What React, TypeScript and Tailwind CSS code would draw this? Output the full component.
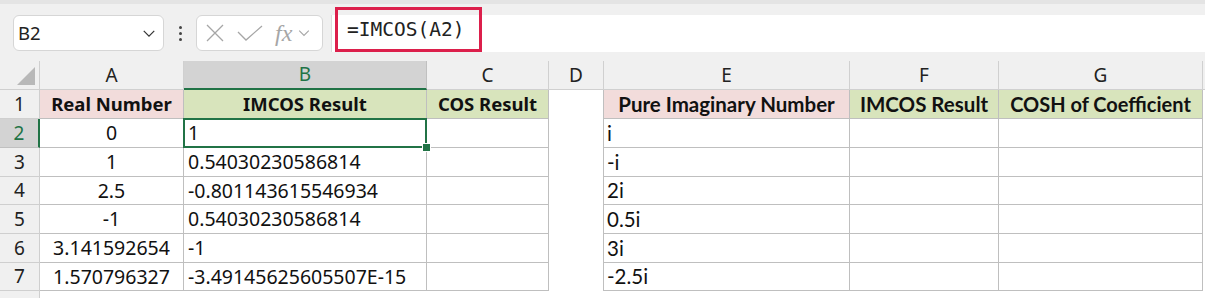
const leftFont = { fontFamily: '"Noto Sans", "Open Sans", sans-serif' };
const rightFont = { fontFamily: "Lato, sans-serif" };

const cols = ["A", "B", "C", "D", "E", "F", "G"];

const leftRows = [
  ["0", "1"],
  ["1", "0.54030230586814"],
  ["2.5", "-0.801143615546934"],
  ["-1", "0.54030230586814"],
  ["3.141592654", "-1"],
  ["1.570796327", "-3.49145625605507E-15"],
];

const rightRows = ["i", "-i", "2i", "0.5i", "3i", "-2.5i"];

const Chevron = ({ className }: { className?: string }) => (
  <svg viewBox="0 0 16 10" className={className} fill="none" stroke="currentColor" strokeWidth="1.4">
    <path d="M2 2 L8 8 L14 2" />
  </svg>
);

const App = () => {
  return (
    <div className="w-[1205px] h-[298px] overflow-hidden bg-white" style={leftFont}>
      {/* formula bar */}
      <div className="h-[61px] bg-[#f0f0f0] relative border-t-[4px] border-[#e4e4e4]">
        <div className="flex items-center h-[53px] pt-[5px]">
          <div className="ml-[13px] w-[151px] h-[36px] bg-white border border-[#d6d6d6] rounded-[6px] flex items-center justify-between pl-[4px] pr-[7px]">
            <span className="text-[18.5px] text-[#222]">B2</span>
            <Chevron className="w-[14px] h-[9px] text-[#333]" />
          </div>
          <div className="w-[32px] flex flex-col items-center gap-[3px]">
            <span className="w-[3px] h-[3px] bg-[#444] rounded-full" />
            <span className="w-[3px] h-[3px] bg-[#444] rounded-full" />
            <span className="w-[3px] h-[3px] bg-[#444] rounded-full" />
          </div>
          <div className="w-[127px] h-[36px] bg-white border border-[#d6d6d6] rounded-[6px] flex items-center pl-[9px] text-[#a6a6a6]">
            <svg viewBox="0 0 18 18" className="w-[18px] h-[18px]" stroke="currentColor" strokeWidth="1.3">
              <path d="M1 1 L17 17 M17 1 L1 17" />
            </svg>
            <svg viewBox="0 0 26 16" className="w-[26px] h-[16px] ml-[13px]" fill="none" stroke="currentColor" strokeWidth="1.3">
              <path d="M1 7 L9 15 L25 1" />
            </svg>
            <span className="ml-[12px] text-[24px] italic leading-none" style={{ fontFamily: '"Liberation Serif", serif' }}>
              fx
            </span>
            <Chevron className="w-[14px] h-[8px] ml-[5px]" />
          </div>
          <div className="ml-[8px] flex-1 h-[37px] bg-white border-l border-[#dcdcdc]" />
        </div>
        <div
          className="absolute left-[335px] top-[3px] w-[147px] h-[45px] border-[3px] border-[#dc1f4b] flex items-center pl-[9px] text-[19.5px] text-[#222]"
          style={{ fontFamily: '"DejaVu Sans Mono", "Liberation Mono", monospace' }}
        >
          =IMCOS(A2)
        </div>
      </div>

      {/* grid */}
      <div className="grid leading-none grid-cols-[40px_144px_243px_122px_55px_246px_149px_204px_2px] grid-rows-[29px_29px_29px_29px_28px_29px_29px_28px_7px]">
        {/* column headers */}
        <div className="bg-[#f0f0f0] border-r border-b border-[#cfcfcf] relative">
          <svg viewBox="0 0 20 20" className="absolute right-[4px] bottom-[4px] w-[18px] h-[18px]">
            <path d="M20 0 L20 20 L0 20 Z" fill="#b8b8b8" />
          </svg>
        </div>
        {cols.map((c) =>
          c === "B" ? (
            <div
              key={c}
              className="bg-[#d3d3d3] border-r border-[#c0c0c0] border-b-2 border-b-[#217346] flex items-center justify-center text-[19px] text-[#217346]"
            >
              {c}
            </div>
          ) : (
            <div
              key={c}
              className="bg-[#f0f0f0] border-r border-b border-[#d0d0d0] flex items-center justify-center text-[19px] text-[#222]"
            >
              {c}
            </div>
          )
        )}
        <div className="bg-[#f0f0f0] border-b border-[#d0d0d0]" />

        {/* row 1 */}
        <div className="bg-[#f0f0f0] border-r border-b border-[#cfcfcf] flex items-center justify-center text-[19px] text-[#222]">
          1
        </div>
        <div className="bg-[#f2dcdb] border-r border-b border-[#bfbfbf] flex items-center justify-center text-[18.5px] font-bold text-[#111]">
          Real Number
        </div>
        <div className="bg-[#d8e4bc] border-r border-b border-[#bfbfbf] flex items-center justify-center text-[18.5px] font-bold text-[#111]">
          IMCOS Result
        </div>
        <div className="bg-[#d8e4bc] border-r border-b border-[#bfbfbf] flex items-center justify-center text-[18.5px] font-bold text-[#111]">
          COS Result
        </div>
        <div className="bg-white border-r border-[#bfbfbf]" />
        <div
          className="bg-[#f2dcdb] border-r border-b border-[#bfbfbf] flex items-center justify-center text-[20.5px] font-bold text-[#111]"
          style={rightFont}
        >
          Pure Imaginary Number
        </div>
        <div
          className="bg-[#d8e4bc] border-r border-b border-[#bfbfbf] flex items-center justify-center text-[20.5px] font-bold text-[#111]"
          style={rightFont}
        >
          IMCOS Result
        </div>
        <div
          className="bg-[#d8e4bc] border-r border-b border-[#bfbfbf] flex items-center justify-center text-[20px] font-bold text-[#111]"
          style={rightFont}
        >
          COSH of Coefficient
        </div>
        <div className="bg-white" />

        {/* rows 2-7 */}
        {leftRows.map((r, i) => {
          const selected = i === 0;
          return [
            <div
              key={`rh${i}`}
              className={`flex items-center justify-center text-[19px] border-b ${
                selected
                  ? "bg-[#d3d3d3] text-[#217346] border-r-2 border-r-[#217346] border-b-[#c0c0c0]"
                  : "bg-[#f0f0f0] text-[#222] border-r border-[#cfcfcf]"
              }`}
            >
              {i + 2}
            </div>,
            <div key={`a${i}`} className="border-r border-b border-[#bfbfbf] flex items-center justify-center text-[19.5px] text-[#111]">
              {r[0]}
            </div>,
            <div key={`b${i}`} className="relative border-r border-b border-[#bfbfbf] flex items-center pl-[4px] text-[19.5px] text-[#111]">
              {r[1]}
              {selected && (
                <>
                  <div className="absolute z-10 left-[-1px] top-[-1px] right-[-1px] bottom-[-1px] border-2 border-[#217346]" />
                  <div className="absolute z-20 right-[-5px] bottom-[-5px] w-[9px] h-[9px] bg-[#217346] border border-white" />
                </>
              )}
            </div>,
            <div key={`c${i}`} className="border-r border-b border-[#bfbfbf]" />,
            <div key={`d${i}`} className="border-r border-[#bfbfbf]" />,
            <div
              key={`e${i}`}
              className="border-r border-b border-[#bfbfbf] flex items-center pl-[3px] text-[20.5px] text-[#111]"
              style={rightFont}
            >
              {rightRows[i]}
            </div>,
            <div key={`f${i}`} className="border-r border-b border-[#bfbfbf]" />,
            <div key={`g${i}`} className="border-r border-b border-[#bfbfbf]" />,
            <div key={`x${i}`} />,
          ];
        })}

        {/* partial row 8 */}
        <div className="bg-[#f0f0f0] border-r border-[#cfcfcf]" />
      </div>
    </div>
  );
};

export default App;
